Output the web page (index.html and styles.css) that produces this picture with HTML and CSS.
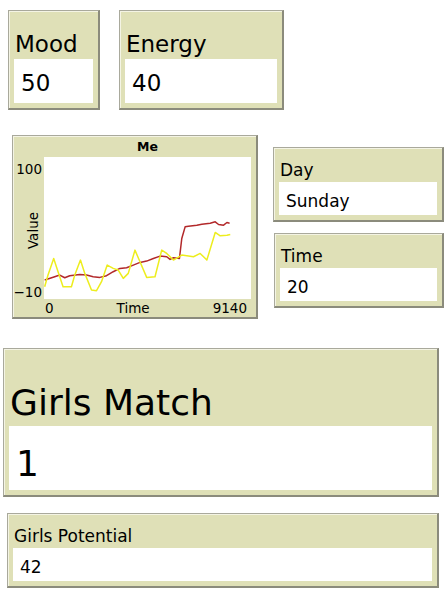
FILE: index.html
```html
<!DOCTYPE html>
<html lang="en">
<head>
    <meta charset="UTF-8">
    <meta name="viewport" content="width=device-width, initial-scale=1.0">
    <title>Me - Interface</title>
    <link rel="stylesheet" href="styles.css">
</head>
<body>
    <div class="interface">
        <!-- Top monitors -->
        <div class="row-top">
            <div class="monitor mon-lg mood">
                <div class="monitor-label">Mood</div>
                <div class="monitor-value">50</div>
            </div>
            <div class="monitor mon-lg energy">
                <div class="monitor-label">Energy</div>
                <div class="monitor-value">40</div>
            </div>
        </div>

        <!-- Plot and clock -->
        <div class="row-mid">
            <div class="plot">
                <div class="plot-title">Me</div>
                <div class="plot-yaxis">
                    <span>100</span>
                    <span class="plot-ylabel"><span>Value</span></span>
                    <span>&minus;10</span>
                </div>
                <div class="plot-canvas">
                    <svg viewBox="133 95 619 427" preserveAspectRatio="none">
                        <polyline class="pen-red" points="135,465 165,455 180,450 195,458 210,452 240,448 260,450 280,455 300,457 320,452 340,440 360,430 380,428 400,420 420,412 440,408 460,400 480,393 500,395 510,403 520,398 538,400 545,340 555,305 565,303 590,300 605,297 630,294 645,290 655,298 670,300 680,292 688,294"/>
                        <polyline class="pen-yellow" points="135,485 145,450 162,400 175,440 190,485 215,485 225,450 242,405 255,445 275,495 290,497 305,470 322,420 340,430 355,435 370,460 385,445 405,375 420,410 440,457 465,455 485,375 500,385 520,405 545,390 580,395 600,385 620,405 645,322 660,332 680,330 690,328"/>
                    </svg>
                </div>
                <div class="plot-xaxis">
                    <span>0</span>
                    <span>Time</span>
                    <span>9140</span>
                </div>
            </div>

            <div class="side">
                <div class="monitor mon-sm day">
                    <div class="monitor-label">Day</div>
                    <div class="monitor-value">Sunday</div>
                </div>
                <div class="monitor mon-sm time">
                    <div class="monitor-label">Time</div>
                    <div class="monitor-value">20</div>
                </div>
            </div>
        </div>

        <!-- Matches -->
        <div class="monitor mon-xl match">
            <div class="monitor-label">Girls Match</div>
            <div class="monitor-value">1</div>
        </div>
        <div class="monitor mon-sm potential">
            <div class="monitor-label">Girls Potential</div>
            <div class="monitor-value">42</div>
        </div>
    </div>
</body>
</html>
```

FILE: styles.css
```css
/* NetLogo style interface */
body {
    margin: 0;
    padding: 0;
    background-color: #fff;
    font-family: "DejaVu Sans", Verdana, sans-serif;
    color: #000;
}

.interface {
    width: 445px;
}

/* Widgets share the same bevelled beige box */
.monitor,
.plot {
    box-sizing: border-box;
    background-color: #dfe0b7;
    border-top: 1px solid #a9a99c;
    border-left: 1px solid #a9a99c;
    border-right: 2px solid #8b8b7c;
    border-bottom: 2px solid #8b8b7c;
    box-shadow: inset 1px 1px 0 #f4f4e4;
}

.monitor {
    display: flex;
    flex-direction: column;
    padding: 0 5px 5px 5px;
}

.monitor-label {
    flex: 1;
    display: flex;
    align-items: flex-end;
    padding-left: 1px;
    line-height: 1;
}

.monitor-value {
    background-color: #fff;
    line-height: 1;
    padding-left: 7px;
    box-sizing: border-box;
}

/* sizes */
.mon-lg .monitor-label {
    font-size: 23px;
    padding-bottom: 3px;
}
.mon-lg .monitor-value {
    font-size: 23px;
    height: 44px;
    padding-top: 13px;
}

.mon-sm .monitor-label {
    font-size: 17px;
    padding-bottom: 3px;
}
.mon-sm .monitor-value {
    font-size: 17px;
    height: 33px;
    padding-top: 11px;
}

.mon-xl .monitor-label {
    font-size: 36px;
    padding-bottom: 5px;
}
.mon-xl .monitor-value {
    font-size: 36px;
    height: 64px;
    padding-top: 20px;
}

/* rows */
.row-top {
    display: flex;
    padding: 10px 0 0 8px;
    gap: 19px;
}
.mood {
    width: 92px;
    height: 100px;
}
.energy {
    width: 165px;
    height: 100px;
}

.row-mid {
    display: flex;
    margin-top: 25px;
    padding-left: 12px;
}

.side {
    margin-left: 15px;
    padding-top: 12px;
}
.day {
    width: 171px;
    height: 75px;
}
.time {
    width: 170px;
    height: 75px;
    margin-top: 11px;
    margin-left: 1px;
}

.match {
    width: 436px;
    height: 149px;
    margin: 29px 0 0 3px;
}
.potential {
    width: 432px;
    height: 75px;
    margin: 16px 0 0 7px;
}

/* plot */
.plot {
    width: 246px;
    height: 184px;
    padding-right: 5px;
    display: grid;
    grid-template-columns: 31px 207px;
    grid-template-rows: 21px 142px 18px;
    font-size: 13.5px;
    line-height: 1;
}
.plot-title {
    grid-column: 2;
    grid-row: 1;
    text-align: center;
    font-weight: bold;
    font-size: 12.5px;
    padding-top: 5px;
}
.plot-yaxis {
    grid-column: 1;
    grid-row: 2;
    display: flex;
    flex-direction: column;
    align-items: flex-end;
    padding: 6px 2px 0 0;
}
.plot-ylabel {
    flex: 1;
    display: flex;
    align-items: center;
    margin-right: 2px;
}
.plot-ylabel span {
    writing-mode: vertical-rl;
    transform: rotate(180deg);
}
.plot-canvas {
    grid-column: 2;
    grid-row: 2;
    background-color: #fff;
}
.plot-canvas svg {
    display: block;
    width: 100%;
    height: 100%;
}
.plot-canvas polyline {
    fill: none;
    stroke-width: 1.5;
    stroke-linejoin: round;
    vector-effect: non-scaling-stroke;
}
.pen-red {
    stroke: #b2282a;
}
.pen-yellow {
    stroke: #eded1e;
}
.plot-xaxis {
    grid-column: 1 / -1;
    grid-row: 3;
    display: flex;
    justify-content: space-between;
    padding: 3px 4px 0 32px;
}
```
